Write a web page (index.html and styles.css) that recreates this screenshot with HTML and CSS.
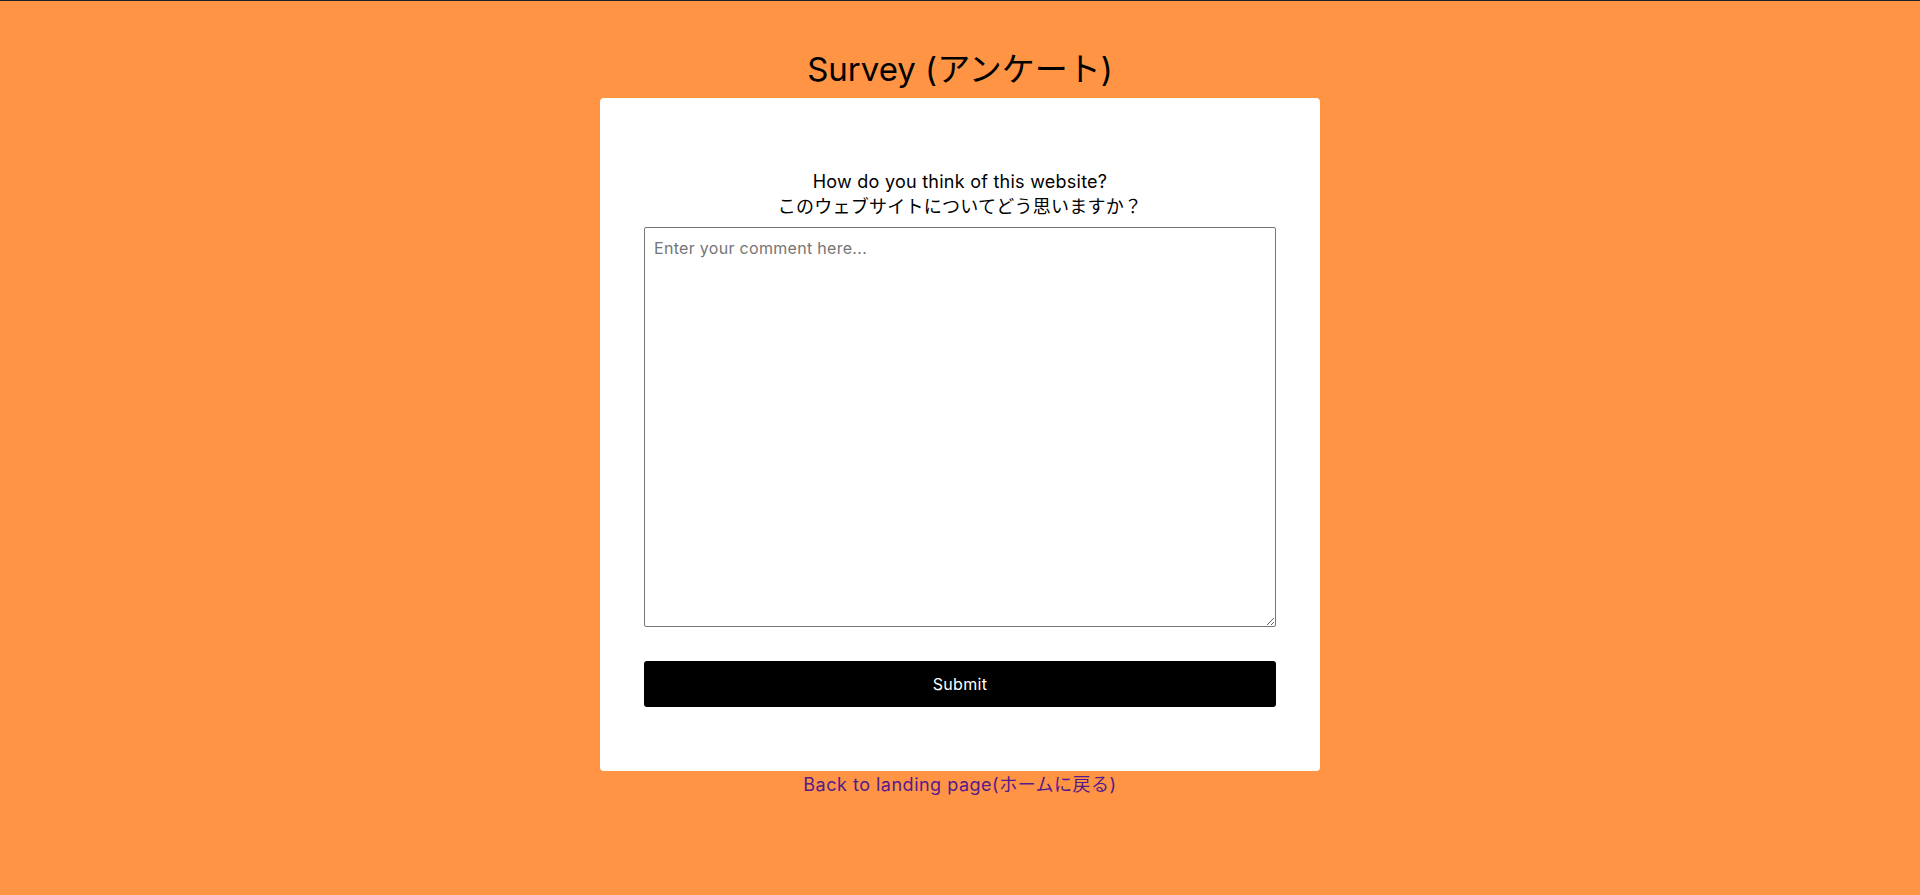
FILE: index.html
```html
<!DOCTYPE html>
<html lang="ja">
<head>
<meta charset="utf-8">
<title>Survey</title>
<link rel="stylesheet" href="styles.css">
</head>
<body>
<main class="page">
  <h1 class="title">Survey (アンケート)</h1>
  <form class="card">
    <label class="question" for="comment">How do you think of this website?<br>このウェブサイトについてどう思いますか？</label>
    <textarea id="comment" class="comment" placeholder="Enter your comment here..."></textarea>
    <button type="button" class="submit">Submit</button>
  </form>
  <a class="back" href="#">Back to landing page(ホームに戻る)</a>
</main>
</body>
</html>
```
FILE: styles.css
```css
html, body {
  margin: 0;
  padding: 0;
}
body {
  background: #ff9445;
  border-top: 1px solid #202124;
  min-height: 894px;
  font-family: "Inter", "Noto Sans CJK JP", sans-serif;
  color: #000;
}
.page {
  display: flex;
  flex-direction: column;
  align-items: center;
}
.title {
  font-size: 33px;
  font-weight: 400;
  line-height: 44px;
  margin: 46px 0 7px;
}
.card {
  box-sizing: border-box;
  width: 720px;
  height: 673px;
  background: #fff;
  border-radius: 4px;
  padding: 71px 44px 0;
  display: flex;
  flex-direction: column;
}
.question {
  text-align: center;
  font-size: 18px;
  line-height: 25px;
  letter-spacing: 0.25px;
  margin-bottom: 8px;
}
.comment {
  box-sizing: border-box;
  width: 632px;
  height: 400px;
  border: 1px solid #767676;
  border-radius: 2px;
  padding: 8px 9px;
  font-family: inherit;
  font-size: 16px;
  line-height: 24px;
  letter-spacing: 0.3px;
  resize: both;
}
.comment::placeholder {
  color: #757575;
}
.submit {
  margin-top: 34px;
  width: 632px;
  height: 46px;
  background: #000;
  color: #fff;
  border: none;
  border-radius: 3px;
  font-family: inherit;
  font-size: 16px;
  letter-spacing: 0.3px;
}
.back {
  margin-top: 0;
  font-size: 18px;
  line-height: 28px;
  letter-spacing: 0.5px;
  color: #551a8b;
  text-decoration: none;
}
```
